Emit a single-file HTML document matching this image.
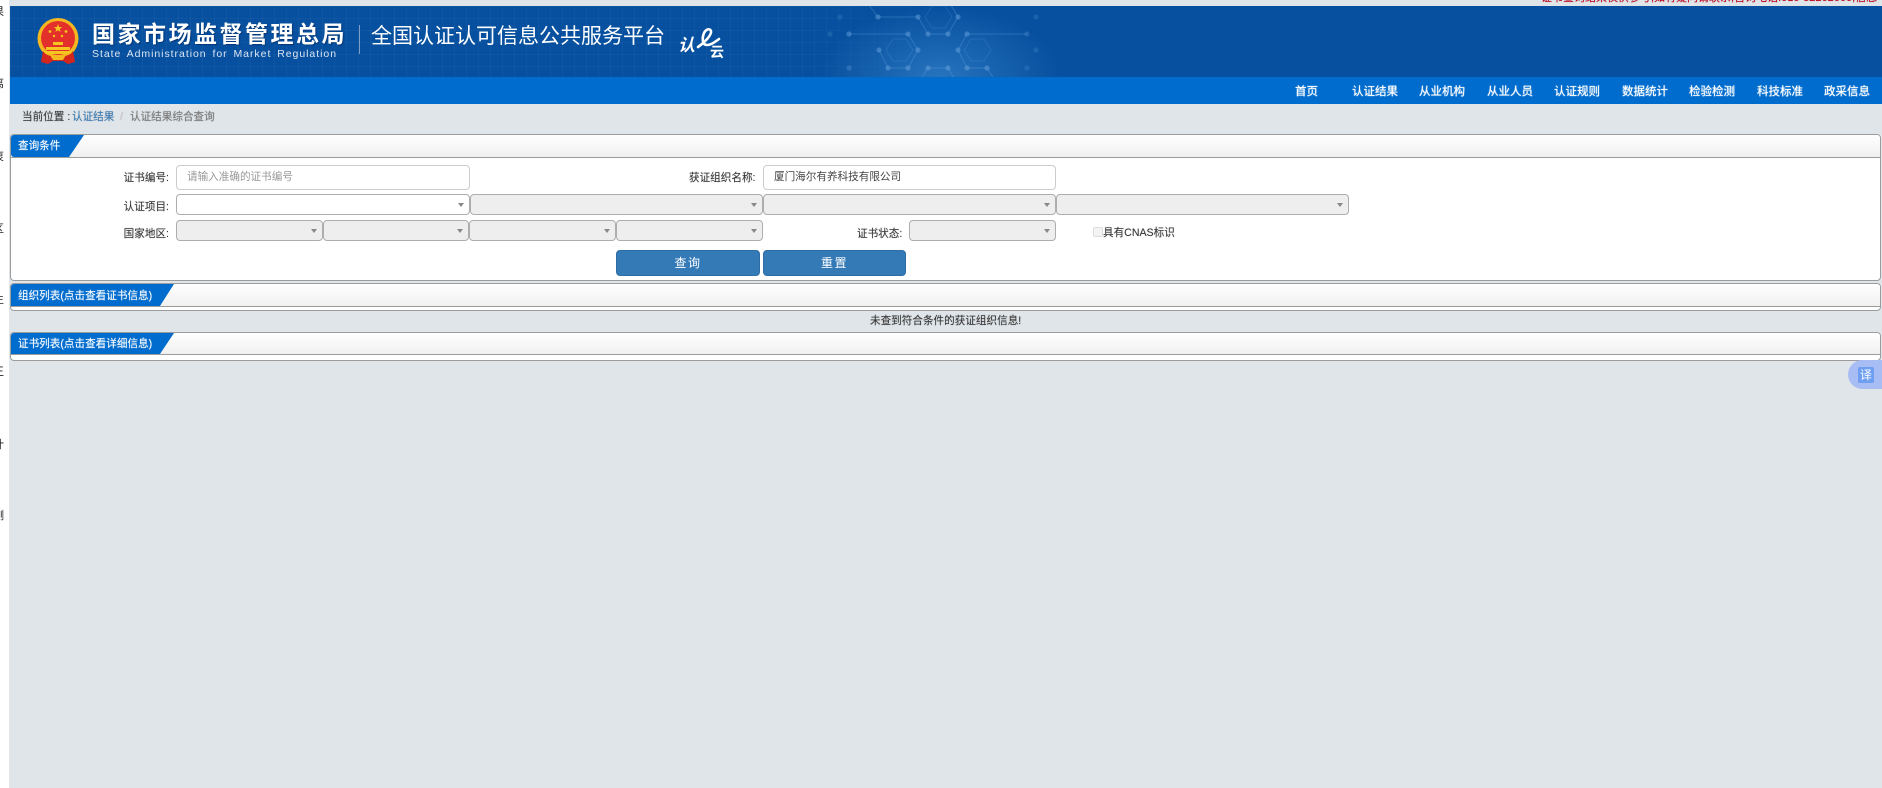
<!DOCTYPE html>
<html lang="zh"><head><meta charset="utf-8"><title>认证结果综合查询</title>
<style>
html,body{margin:0;padding:0;width:1882px;height:788px;overflow:hidden;background:#e0e5e9}
body{position:relative;font-family:"Liberation Sans","Noto Sans CJK SC",sans-serif;font-size:10.6px;color:#333}
div,span,svg{position:absolute;box-sizing:border-box}
.t{white-space:nowrap;line-height:14px;text-shadow:0 0 1px rgba(60,60,60,.35)}
.lb{text-align:right;width:80px;left:89px}
.strip{left:0;top:0;width:9px;height:788px;background:#fff;overflow:hidden}
.strip span{left:-7px;font-size:11px;line-height:12px;color:#222}
.panel{left:10px;width:1871px;border:1px solid #9c9c9c;border-radius:4px;background:#fff;overflow:hidden}
.ph{left:0;top:0;right:0;background:linear-gradient(#fff,#f0f0f0);border-bottom:1px solid #9c9c9c}
.tab{left:0;top:0;bottom:0;background:#006cce}
.tt{left:7px;color:#fff;font-size:10.6px;line-height:14px;white-space:nowrap;text-shadow:0 0 1px rgba(255,255,255,.5)}
.inp{background:#fff;border:1px solid #ccc;border-radius:4px;height:25px;top:165px;line-height:22px;padding-left:10px;font-size:10.6px;white-space:nowrap}
.sel{border:1px solid #adadad;border-radius:4px;height:21px;background:#eee}
.sel:after{content:"";position:absolute;right:5px;top:8px;border-left:3.5px solid transparent;border-right:3.5px solid transparent;border-top:4px solid #888}
.btn{top:250px;height:26px;background:#337ab7;border:1px solid #2e6da4;border-radius:4px;color:#fff;text-align:center;font-size:12px;line-height:24px;letter-spacing:1.5px}
.nav{top:85px;color:#fff;font-size:11.5px;line-height:14px;white-space:nowrap;width:48px;text-shadow:0 0 1px #fff}
</style></head><body>
<div class="strip">
<span style="top:6px">果</span><span style="top:78px">离</span><span style="top:151px">衷</span><span style="top:223px">区</span><span style="top:294px">生</span><span style="top:366px">王</span><span style="top:439px">计</span><span style="top:510px">测</span>
</div>
<div class="t" style="left:1541px;top:-9px;width:336px;overflow:hidden;color:#c4001a;font-size:11px">证书查询结果仅供参考,如有疑问请联系,咨询电话:010-82262660,信息更新时间以实际公示信息为准</div>

<div style="left:10px;top:6px;width:1872px;height:71px;background:#07509f;overflow:hidden">
<div style="left:0;top:0;width:1000px;height:71px;background-image:linear-gradient(rgba(255,255,255,.03) 1px,transparent 1px),linear-gradient(90deg,rgba(255,255,255,.03) 1px,transparent 1px);background-size:12px 12px;-webkit-mask-image:linear-gradient(90deg,#000 0,#000 800px,transparent 950px);mask-image:linear-gradient(90deg,#000 0,#000 800px,transparent 950px)"></div>
<div style="left:790px;top:0;width:300px;height:71px;background:radial-gradient(ellipse 120px 70px at 140px 71px,rgba(70,150,220,.5),rgba(7,80,159,0))"></div>
<svg style="left:810px;top:0" width="240" height="72" viewBox="820 6 240 72" fill="none" stroke="#6aa7df" stroke-opacity=".32" stroke-width="1">
<path d="M878 17H918M849 34H908M967 34H1027M918 17L928 34H948L958 17L948 0M879 50L888 68H908L918 50L908 34M958 50L967 34M958 50L967 68H987L998 85M928 68H948M928 68L920 80M948 68L955 80M865 0L878 17M918 50L908 68"/>
<path d="M886 50l7-11h13l7 11-7 11h-13zM964 50l7-11h13l7 11-7 11h-13zM925 17l7-11h13l7 11-7 11h-13z" stroke-opacity=".2"/>
<g fill="#6aa7df" fill-opacity=".45" stroke="none"><circle cx="878" cy="17" r="2.6"/><circle cx="918" cy="17" r="2.6"/><circle cx="849" cy="34" r="2.6"/><circle cx="908" cy="34" r="2.6"/><circle cx="928" cy="34" r="2.6"/><circle cx="948" cy="34" r="2.6"/><circle cx="967" cy="34" r="2.6"/><circle cx="1027" cy="34" r="2.6" fill-opacity=".25"/><circle cx="879" cy="50" r="2.6"/><circle cx="918" cy="50" r="2.6"/><circle cx="958" cy="50" r="2.6"/><circle cx="888" cy="68" r="2.6"/><circle cx="908" cy="68" r="2.6"/><circle cx="928" cy="68" r="2.6"/><circle cx="948" cy="68" r="2.6"/><circle cx="967" cy="68" r="2.6"/><circle cx="987" cy="68" r="2.6"/><circle cx="849" cy="68" r="2.6" fill-opacity=".3"/><circle cx="958" cy="17" r="2.6"/><circle cx="1027" cy="68" r="2.6" fill-opacity=".2"/><circle cx="1036" cy="50" r="2.6" fill-opacity=".2"/><circle cx="1036" cy="17" r="2.6" fill-opacity=".2"/><circle cx="830" cy="34" r="2.6" fill-opacity=".2"/><circle cx="840" cy="17" r="2.6" fill-opacity=".2"/></g>
</svg>
</div>

<svg style="left:36px;top:18px" width="44" height="46" viewBox="0 0 44 46">
<circle cx="22" cy="20.5" r="20.5" fill="#f4b71f"/><circle cx="22" cy="20" r="17" fill="#e4302a"/>
<polygon points="22,6 23.1,9 26.3,9.1 23.8,11 24.6,14 22,12.2 19.4,14 20.2,11 17.7,9.1 20.9,9" fill="#f7c51f"/>
<circle cx="14" cy="13.5" r="1.4" fill="#f7c51f"/><circle cx="30" cy="13.5" r="1.4" fill="#f7c51f"/><circle cx="18" cy="18" r="1.2" fill="#f7c51f"/><circle cx="26" cy="18" r="1.2" fill="#f7c51f"/>
<path d="M17 24h10v3H17zM10 29h24v3H10zM8 33h28v3H8z" fill="#f7c51f"/>
<path d="M7 33c2 3 4 4 8 5h14c4-1 6-2 8-5l2 11-7 2-5-3H17l-5 3-7-2z" fill="#d3261f"/>
<path d="M14 37h16l-3 5H17z" fill="#f5b81e"/>
</svg>

<div class="t" style="left:92px;top:21px;font-size:23px;line-height:26px;font-weight:bold;color:#fff;letter-spacing:2.5px;text-shadow:1px 1px 1px rgba(0,30,80,.5)">国家市场监督管理总局</div>
<div class="t" style="left:92px;top:47px;font-size:10.5px;color:#dbe6f3;letter-spacing:.96px;word-spacing:2px;text-shadow:none">State Administration for Market Regulation</div>
<div style="left:359px;top:25px;width:1px;height:29px;background:#7f9fc8"></div>
<div class="t" style="left:371px;top:24px;font-size:21px;line-height:26px;color:#fff;text-shadow:none">全国认证认可信息公共服务平台</div>
<div class="t" style="left:678px;top:36px;font-size:17px;line-height:20px;color:#fff;font-style:italic;font-weight:bold;text-shadow:none">认</div>
<svg style="left:692px;top:27px" width="30" height="24" viewBox="0 0 30 24" fill="none" stroke="#fff" stroke-width="2.6" stroke-linecap="round"><path d="M6 20C12 16 20 8 19 4c-1-3-5-2-7 2-2 5-2 12 3 12 4 0 8-3 12-6"/></svg>
<div class="t" style="left:710px;top:45px;font-size:14px;line-height:15px;color:#fff;font-weight:bold;text-shadow:none">云</div>

<div style="left:10px;top:77px;width:1872px;height:27px;background:#006cce"></div>
<div class="nav" style="left:1295px">首页</div>
<div class="nav" style="left:1352px">认证结果</div>
<div class="nav" style="left:1419px">从业机构</div>
<div class="nav" style="left:1487px">从业人员</div>
<div class="nav" style="left:1554px">认证规则</div>
<div class="nav" style="left:1622px">数据统计</div>
<div class="nav" style="left:1689px">检验检测</div>
<div class="nav" style="left:1757px">科技标准</div>
<div class="nav" style="left:1824px">政采信息</div>

<div class="t" style="left:22px;top:110px;color:#333">当前位置 :</div>
<div class="t" style="left:72px;top:110px;color:#337ab7">认证结果</div>
<div class="t" style="left:120px;top:110px;color:#ccc">/</div>
<div class="t" style="left:130px;top:110px;color:#777">认证结果综合查询</div>

<div class="panel" style="top:134px;height:147px"><div class="ph" style="height:23px"><div class="tab" style="width:73px;clip-path:polygon(0 0,100% 0,79.5% 100%,0 100%);border-bottom-left-radius:3px"></div><div class="tt" style="top:4px">查询条件</div></div></div>
<div class="panel" style="top:283px;height:28px"><div class="ph" style="height:23px"><div class="tab" style="width:163px;clip-path:polygon(0 0,100% 0,91.4% 100%,0 100%)"></div><div class="tt" style="top:5px">组织列表(点击查看证书信息)</div></div></div>
<div class="panel" style="top:332px;height:29px"><div class="ph" style="height:22px"><div class="tab" style="width:163px;clip-path:polygon(0 0,100% 0,91.4% 100%,0 100%)"></div><div class="tt" style="top:4px">证书列表(点击查看详细信息)</div></div></div>
<div class="t" style="left:870px;top:314px;color:#333">未查到符合条件的获证组织信息!</div>

<div class="t lb" style="top:171px">证书编号:</div>
<div class="t lb" style="top:200px">认证项目:</div>
<div class="t lb" style="top:227px">国家地区:</div>
<div class="inp" style="left:176px;width:294px;color:#999">请输入准确的证书编号</div>
<div class="t" style="left:689px;top:171px">获证组织名称:</div>
<div class="inp" style="left:763px;width:293px;color:#444">厦门海尔有养科技有限公司</div>

<div class="sel" style="left:176px;top:194px;width:294px;background:#fff"></div>
<div class="sel" style="left:470px;top:194px;width:293px"></div>
<div class="sel" style="left:763px;top:194px;width:293px"></div>
<div class="sel" style="left:1056px;top:194px;width:293px"></div>

<div class="sel" style="left:176px;top:220px;width:147px"></div>
<div class="sel" style="left:323px;top:220px;width:146px"></div>
<div class="sel" style="left:469px;top:220px;width:147px"></div>
<div class="sel" style="left:616px;top:220px;width:147px"></div>
<div class="t" style="left:857px;top:227px">证书状态:</div>
<div class="sel" style="left:909px;top:220px;width:147px"></div>
<div style="left:1093px;top:227px;width:10px;height:10px;background:#f4f4f4;border:1px solid #ddd;border-radius:2px"></div>
<div class="t" style="left:1103px;top:226px">具有CNAS标识</div>

<div class="btn" style="left:616px;width:144px">查询</div>
<div class="btn" style="left:763px;width:143px">重置</div>

<div style="left:1848px;top:360px;width:34px;height:29px;background:#a9bdf5;border-radius:15px 0 0 15px"></div>
<div style="left:1858px;top:367px;width:16px;height:16px;background:#6e9ff0;border-radius:2px;color:#fff;font-size:12px;line-height:16px;text-align:center">译</div>
</body></html>
